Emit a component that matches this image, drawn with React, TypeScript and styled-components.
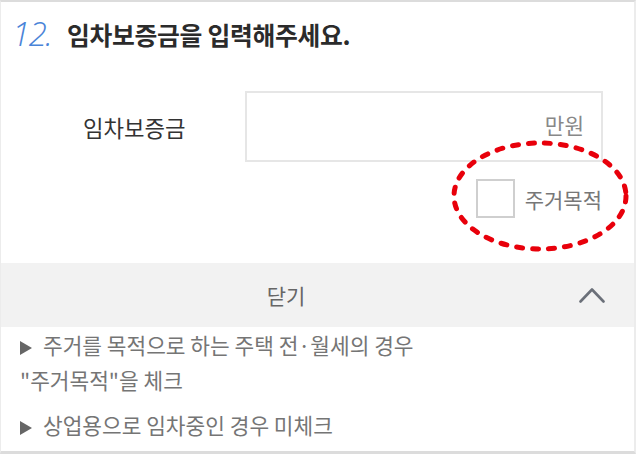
import React from "react";
import styled, { createGlobalStyle } from "styled-components";

const Global = createGlobalStyle`
  html, body { margin: 0; padding: 0; background: #fff; }
  * { box-sizing: border-box; }
`;

const KR = `"Noto Sans CJK KR", "Noto Sans", sans-serif`;

const Page = styled.div`
  position: relative;
  width: 636px;
  height: 454px;
  border-top: 2px solid #dcdcdc;
  border-bottom: 3px solid #dcdcdc;
  border-left: 1px solid #ececec;
  border-right: 2px solid #ececec;
  display: flex;
  flex-direction: column;
  font-family: ${KR};
  overflow: hidden;
`;

const TitleRow = styled.div`
  display: flex;
  align-items: center;
  height: 34px;
  margin-top: 15px;
  padding-left: 11px;
`;

const Num = styled.span`
  font-family: "Open Sans", sans-serif;
  font-style: italic;
  font-weight: 300;
  font-size: 33px;
  color: #4a84d8;
  letter-spacing: -1.5px;
  width: 55px;
  margin-top: -2px;
`;

const Title = styled.h1`
  margin: 0;
  font-size: 24.8px;
  font-weight: 700;
  color: #2b2b2b;
  letter-spacing: -0.3px;
`;

const FormRow = styled.div`
  display: flex;
  align-items: center;
  margin-top: 40px;
  padding-left: 82px;
`;

const Label = styled.label`
  width: 162px;
  font-size: 22.3px;
  color: #333;
  font-weight: 400;
`;

const InputBox = styled.div`
  width: 358px;
  height: 71px;
  border: 2px solid #e6e6e6;
  display: flex;
  align-items: center;
  justify-content: flex-end;
  padding-right: 17px;
  padding-bottom: 4px;
`;

const Unit = styled.span`
  font-size: 21.3px;
  color: #888;
`;

const CheckRow = styled.div`
  position: relative;
  display: flex;
  justify-content: flex-end;
  align-items: center;
  gap: 10px;
  margin-top: 17px;
  padding-right: 32px;
`;

const Box = styled.span`
  width: 39px;
  height: 39px;
  border: 2px solid #cfcfcf;
  background: #fff;
`;

const CheckText = styled.span`
  font-size: 21px;
  color: #777;
`;

const Circle = styled.svg`
  position: absolute;
  left: 450px;
  top: -39px;
  overflow: visible;
  pointer-events: none;
`;

const Bar = styled.div`
  display: flex;
  align-items: center;
  height: 64px;
  margin-top: 45px;
  background: #f2f2f2;
`;

const BarText = styled.span`
  flex: 1;
  text-align: center;
  font-size: 21px;
  color: #666;
  padding-left: 3px;
`;

const Chevron = styled.span`
  width: 66px;
  display: flex;
  align-items: center;
  padding-left: 11px;
`;

const Notes = styled.div`
  padding-left: 19px;
  color: #757575;
  font-size: 21.4px;
`;

const Note = styled.p<{ $gap?: number }>`
  margin: ${(p) => p.$gap ?? 0}px 0 0 0;
  line-height: 35px;
`;

const Tri = styled.span`
  display: inline-block;
  width: 0;
  height: 0;
  border-left: 12px solid #666;
  border-top: 7.5px solid transparent;
  border-bottom: 7.5px solid transparent;
  margin-right: 11px;
  vertical-align: -1px;
`;

export default function App() {
  return (
    <>
      <Global />
      <Page>
        <TitleRow>
          <Num>12.</Num>
          <Title>임차보증금을 입력해주세요.</Title>
        </TitleRow>
        <FormRow>
          <Label>임차보증금</Label>
          <InputBox>
            <Unit>만원</Unit>
          </InputBox>
        </FormRow>
        <CheckRow>
          <Box />
          <CheckText>주거목적</CheckText>
          <Circle width="180" height="114" viewBox="0 0 180 114">
            <ellipse
              cx="89"
              cy="56"
              rx="86"
              ry="53"
              fill="none"
              stroke="#e8000b"
              strokeWidth="5"
              strokeDasharray="6 10"
              strokeLinecap="round"
            />
          </Circle>
        </CheckRow>
        <Bar>
          <BarText>닫기</BarText>
          <Chevron>
            <svg width="26" height="16" viewBox="0 0 26 16">
              <polyline
                points="1.5,14.5 13,2.5 24.5,14.5"
                fill="none"
                stroke="#6b7079"
                strokeWidth="2.6"
                strokeLinecap="round"
                strokeLinejoin="round"
              />
            </svg>
          </Chevron>
        </Bar>
        <Notes>
          <Note>
            <Tri />
            주거를 목적으로 하는 주택 전·월세의 경우
          </Note>
          <Note>"주거목적"을 체크</Note>
          <Note $gap={10}>
            <Tri />
            상업용으로 임차중인 경우 미체크
          </Note>
        </Notes>
      </Page>
    </>
  );
}
